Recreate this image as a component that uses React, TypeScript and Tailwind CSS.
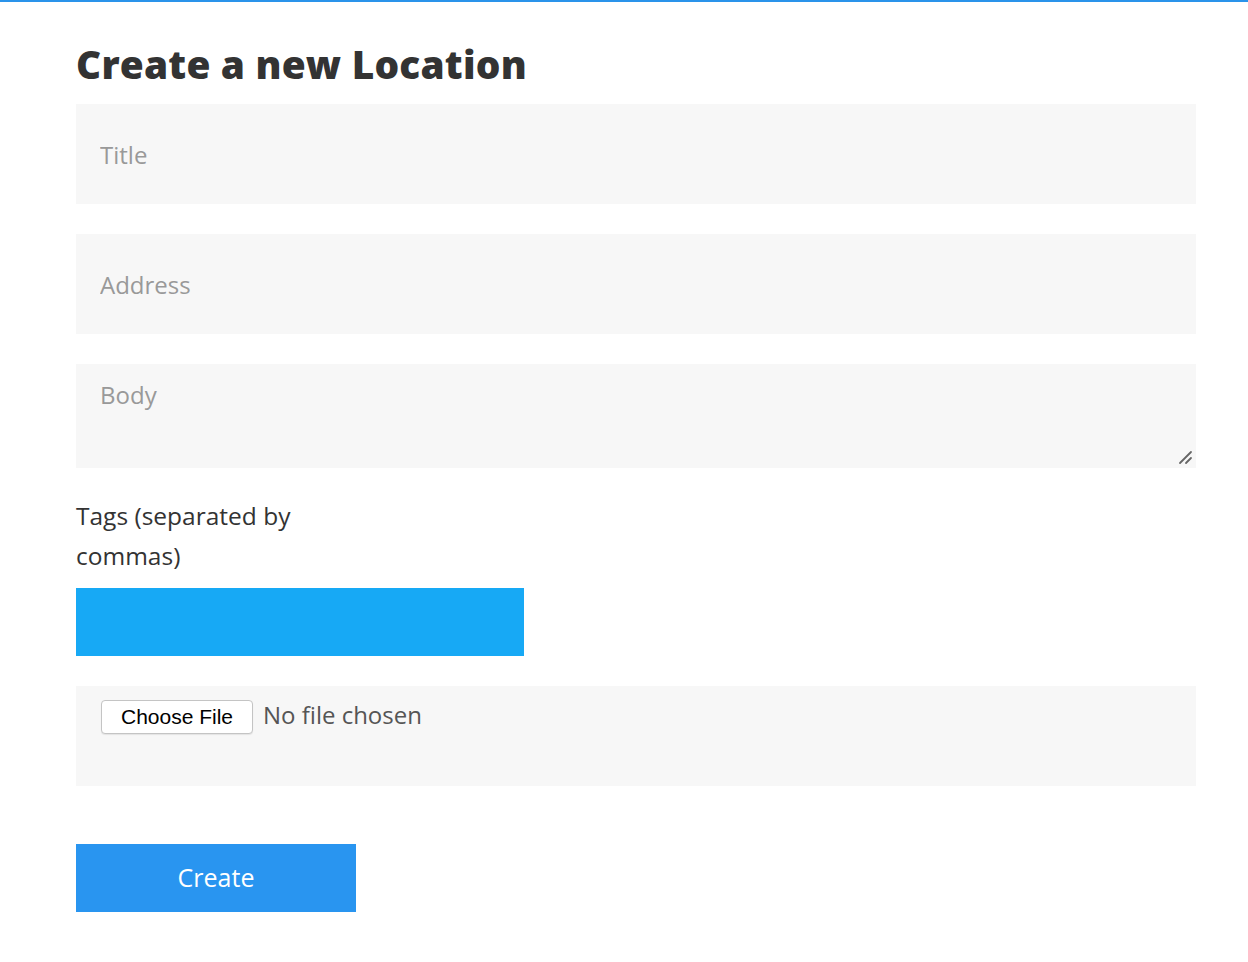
export default function App() {
  const field =
    'block w-full h-[100px] bg-[#f7f7f7] px-6 text-[24px] text-[#333] placeholder:text-[#999] outline-none'

  return (
    <div className="min-h-[962px] bg-white border-t-2 border-[#2a93ea]" style={{ fontFamily: '"Open Sans", sans-serif' }}>
      <div className="mx-[76px] w-[1120px]">
        <h1 className="pt-[36px] text-[38.8px] leading-[52px] font-extrabold text-[#333] tracking-[0.2px]">Create a new Location</h1>
        <form className="mt-[14px] flex flex-col" onSubmit={e => e.preventDefault()}>
          <input type="text" placeholder="Title" className={field} />
          <input type="text" placeholder="Address" className={`${field} mt-[30px]`} />
          <div className="relative mt-[30px]">
            <textarea
              placeholder="Body"
              className="block w-full h-[104px] bg-[#f7f7f7] px-6 pt-[14px] text-[24px] leading-[34px] text-[#333] placeholder:text-[#999] outline-none resize-none"
            />
            {/* resize grip */}
            <svg className="pointer-events-none absolute right-[3px] bottom-[3px]" width="16" height="16" viewBox="0 0 16 16">
              <path d="M3 14 L14 3 M9 14 L14 9" stroke="#666" strokeWidth="1.8" strokeLinecap="round" />
            </svg>
          </div>
          <label className="mt-[28px] w-[260px] text-[24.5px] leading-[40px] text-[#333]">Tags (separated by commas)</label>
          <input type="text" className="block mt-[12px] w-[448px] h-[68px] bg-[#17a9f5] outline-none" />
          <div className="mt-[30px] h-[100px] bg-[#f7f7f7] pl-[25px] pt-[14px] flex items-start gap-[10px]">
            <button
              type="button"
              className="h-[34px] w-[152px] rounded-[4px] border border-[#c4c4c4] bg-white text-[21px] leading-[32px] text-black shadow-[0_1px_1px_rgba(0,0,0,0.08)]"
              style={{ fontFamily: '"Liberation Sans", Arial, sans-serif' }}
            >
              Choose File
            </button>
            <span className="text-[24px] leading-[30px] text-[#555]">No file chosen</span>
          </div>
          <button type="submit" className="mt-[58px] w-[280px] h-[68px] bg-[#2995f0] text-white text-[25px]">
            Create
          </button>
        </form>
      </div>
    </div>
  )
}
